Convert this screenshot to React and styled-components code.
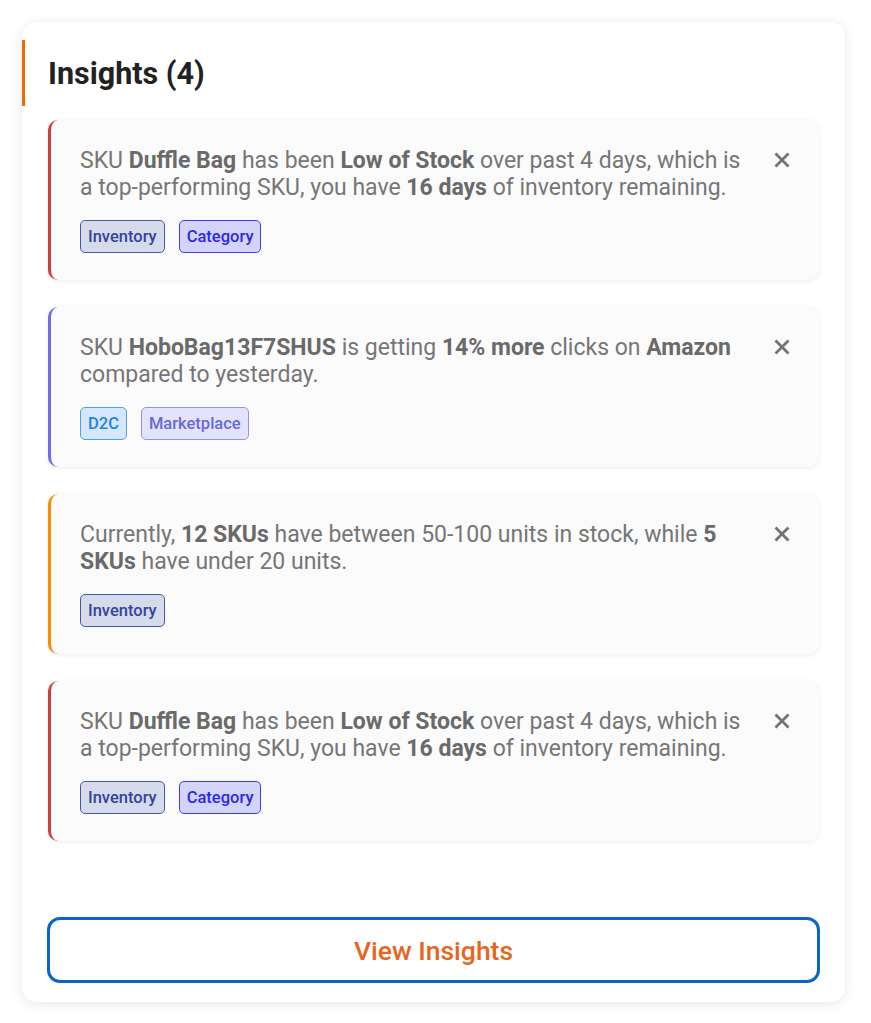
import React from 'react';
import styled, { createGlobalStyle } from 'styled-components';

const GlobalStyle = createGlobalStyle`
  body {
    margin: 0;
    background: #ffffff;
    font-family: Roboto, "Liberation Sans", sans-serif;
  }
`;

const insights = [
  {
    id: 1,
    accent: '#c9403f',
    text: (
      <>
        SKU <b>Duffle Bag</b> has been <b>Low of Stock</b> over past 4 days, which is a
        top-performing SKU, you have <b>16 days</b> of inventory remaining.
      </>
    ),
    tags: ['inventory', 'category'],
  },
  {
    id: 2,
    accent: '#6f6cf0',
    text: (
      <>
        SKU <b>HoboBag13F7SHUS</b> is getting <b>14% more</b> clicks on <b>Amazon</b> compared
        to yesterday.
      </>
    ),
    tags: ['d2c', 'marketplace'],
  },
  {
    id: 3,
    accent: '#fb8c00',
    text: (
      <>
        Currently, <b>12 SKUs</b> have between 50-100 units in stock, while <b>5 SKUs</b> have
        under 20 units.
      </>
    ),
    tags: ['inventory'],
  },
  {
    id: 4,
    accent: '#c9403f',
    text: (
      <>
        SKU <b>Duffle Bag</b> has been <b>Low of Stock</b> over past 4 days, which is a
        top-performing SKU, you have <b>16 days</b> of inventory remaining.
      </>
    ),
    tags: ['inventory', 'category'],
  },
];

const tagStyles = {
  inventory: { label: 'Inventory', bg: '#d5dbeb', border: '#4656a8', color: '#34449c' },
  category: { label: 'Category', bg: '#d3d3fb', border: '#3b3bf2', color: '#2a2ae6' },
  d2c: { label: 'D2C', bg: '#d5e7fb', border: '#4d9ff0', color: '#1f83e6' },
  marketplace: { label: 'Marketplace', bg: '#e3e3fb', border: '#9393ea', color: '#6868dd' },
};

const CloseIcon = () => (
  <svg width="18" height="18" viewBox="0 0 18 18" fill="none">
    <path d="M2.5 2.5 L15.5 15.5 M15.5 2.5 L2.5 15.5" stroke="#737373" strokeWidth="2.8" />
  </svg>
);

const App = () => {
  return (
    <>
      <GlobalStyle />
      <Page>
        <Panel>
          <Header>
            <Title>Insights ({insights.length})</Title>
          </Header>
          <List>
            {insights.map((item) => (
              <Card key={item.id} $accent={item.accent}>
                <Body>
                  <Message>{item.text}</Message>
                  <Tags>
                    {item.tags.map((t) => {
                      const s = tagStyles[t];
                      return (
                        <Tag key={t} $bg={s.bg} $border={s.border} $color={s.color}>
                          {s.label}
                        </Tag>
                      );
                    })}
                  </Tags>
                </Body>
                <CloseButton aria-label="Dismiss">
                  <CloseIcon />
                </CloseButton>
              </Card>
            ))}
          </List>
          <ViewButton>View Insights</ViewButton>
        </Panel>
      </Page>
    </>
  );
};

const Page = styled.div`
  padding: 22px 26px 21px 22px;
`;

const Panel = styled.section`
  box-sizing: border-box;
  width: 823px;
  height: 980px;
  background: #ffffff;
  border-radius: 14px;
  box-shadow: 0 2px 14px rgba(0, 0, 0, 0.09), 0 0 2px rgba(0, 0, 0, 0.04);
  padding: 18px 26px 19px 0;
  display: flex;
  flex-direction: column;
`;

const Header = styled.div`
  height: 66px;
  border-left: 3px solid #ef6c00;
  padding-left: 23px;
  display: flex;
  align-items: center;
`;

const Title = styled.h2`
  margin: 0;
  font-size: 30.5px;
  font-weight: 700;
  color: #222222;
`;

const List = styled.div`
  margin-top: 14px;
  padding-left: 26px;
  display: flex;
  flex-direction: column;
  gap: 27px;
`;

const Card = styled.article`
  box-sizing: border-box;
  height: 160px;
  display: flex;
  align-items: flex-start;
  background: #fbfbfb;
  border-left: 3px solid ${(p) => p.$accent};
  border-radius: 10px;
  box-shadow: 0 1px 5px rgba(0, 0, 0, 0.08);
  padding: 27px 28px 26px 29px;
`;

const Body = styled.div`
  flex: 1;
  min-width: 0;
`;

const Message = styled.p`
  margin: 0;
  font-size: 23px;
  line-height: 27px;
  color: #767676;

  b {
    font-weight: 700;
    color: #6a6a6a;
  }
`;

const Tags = styled.div`
  display: flex;
  gap: 14px;
  margin-top: 19px;
`;

const Tag = styled.span`
  box-sizing: border-box;
  height: 33px;
  display: inline-flex;
  align-items: center;
  padding: 0 7px;
  border-radius: 5px;
  font-size: 16.5px;
  font-weight: 500;
  background: ${(p) => p.$bg};
  border: 1px solid ${(p) => p.$border};
  color: ${(p) => p.$color};
`;

const CloseButton = styled.button`
  background: none;
  border: none;
  padding: 0;
  margin-top: 4px;
  margin-left: 20px;
  width: 18px;
  height: 18px;
  cursor: pointer;
  display: flex;
`;

const ViewButton = styled.button`
  margin-top: auto;
  margin-left: 25px;
  box-sizing: border-box;
  height: 66px;
  width: 773px;
  background: #ffffff;
  border: 3px solid #0b63cc;
  border-radius: 13px;
  color: #e8661c;
  font-family: Roboto, "Liberation Sans", sans-serif;
  font-size: 26.5px;
  font-weight: 500;
  cursor: pointer;
`;

export default App;
